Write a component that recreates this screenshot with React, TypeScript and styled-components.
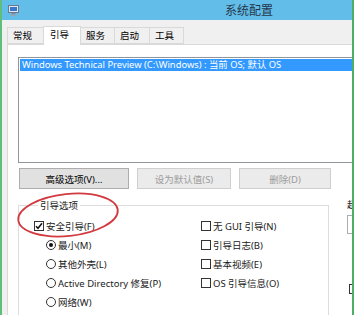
import styled, { createGlobalStyle } from 'styled-components'

const GlobalStyle = createGlobalStyle`
	html, body {
		margin: 0;
		padding: 0;
		background: #f0f0f0;
	}
	* {
		box-sizing: border-box;
	}
`

const FONT = `"Noto Sans", "Noto Sans CJK SC", sans-serif`

function MonitorIcon() {
	return (
		<svg width="11" height="11" viewBox="0 0 11 11">
			<rect x="0.5" y="0.5" width="10" height="7" fill="#dfe8f2" stroke="#6a7b8f" />
			<rect x="2" y="2" width="7" height="4" fill="#3b78c9" />
			<rect x="3.5" y="8" width="4" height="1.5" fill="#7d8a99" />
			<rect x="2" y="9.5" width="7" height="1.2" fill="#9aa6b3" />
		</svg>
	)
}

function CheckMark() {
	return (
		<svg width="8" height="8" viewBox="0 0 8 8">
			<path d="M1 4.2 L3 6.3 L7 1.2" fill="none" stroke="#111" strokeWidth="1.5" />
		</svg>
	)
}

function Ellipse() {
	return (
		<svg width="110" height="54" viewBox="0 0 110 54">
			<ellipse
				cx="55"
				cy="27"
				rx="50"
				ry="21"
				fill="none"
				stroke="#d23a3f"
				strokeWidth="1.8"
				transform="rotate(-6 55 27)"
			/>
		</svg>
	)
}

const tabs = [
	{ label: '常规', width: 37 },
	{ label: '引导', width: 38, active: true },
	{ label: '服务', width: 35 },
	{ label: '启动', width: 36 },
	{ label: '工具', width: 35 },
]

const leftOptions = [
	{ kind: 'check', label: '安全引导(F)', on: true },
	{ kind: 'radio', label: '最小(M)', on: true },
	{ kind: 'radio', label: '其他外壳(L)' },
	{ kind: 'radio', label: 'Active Directory 修复(P)' },
	{ kind: 'radio', label: '网络(W)' },
]

const rightOptions = ['无 GUI 引导(N)', '引导日志(B)', '基本视频(E)', 'OS 引导信息(O)']

function App() {
	return (
		<S.Window>
			<GlobalStyle />
			<S.TitleBar>
				<MonitorIcon />
				<S.Title>系统配置</S.Title>
			</S.TitleBar>
			<S.TabStrip>
				{tabs.map((t) => (
					<S.Tab key={t.label} $width={t.width} $active={!!t.active}>
						{t.label}
					</S.Tab>
				))}
			</S.TabStrip>
			<S.Panel>
				<S.ListBox>
					<S.SelectedRow>Windows Technical Preview (C:\Windows) : 当前 OS; 默认 OS</S.SelectedRow>
				</S.ListBox>
				<S.ButtonRow>
					<S.Button $width={110}>高级选项(V)...</S.Button>
					<S.Button $width={94} disabled>
						设为默认值(S)
					</S.Button>
					<S.Button $width={92} disabled>
						删除(D)
					</S.Button>
				</S.ButtonRow>
				<S.Lower>
					<S.Group>
						<S.Legend>引导选项</S.Legend>
						<S.OptionGrid>
							<S.Column>
								{leftOptions.map((o) => (
									<S.Option key={o.label} $indent={o.kind === 'radio'}>
										{o.kind === 'check' ? (
											<S.Box>{o.on && <CheckMark />}</S.Box>
										) : (
											<S.Radio $on={!!o.on} />
										)}
										<span>{o.label}</span>
									</S.Option>
								))}
							</S.Column>
							<S.Column>
								{rightOptions.map((label) => (
									<S.Option key={label} $indent={false}>
										<S.Box />
										<span>{label}</span>
									</S.Option>
								))}
							</S.Column>
						</S.OptionGrid>
					</S.Group>
					<S.Side>
						<S.SideLabel>超时(T):</S.SideLabel>
						<S.TextBox />
						<S.SideCheck>
							<S.Box />
						</S.SideCheck>
					</S.Side>
				</S.Lower>
			</S.Panel>
			<S.Circle>
				<Ellipse />
			</S.Circle>
		</S.Window>
	)
}
export default App

const Window = styled.div`
	position: relative;
	width: 354px;
	height: 315px;
	overflow: hidden;
	background: #f0f0f0;
	border-left: 2px solid #5fbf7a;
	border-right: 2px solid #4caf68;
	display: flex;
	flex-direction: column;
	font-family: ${FONT};
	color: #000;
`
const TitleBar = styled.div`
	height: 20px;
	flex: none;
	background: #63bde9;
	display: flex;
	align-items: center;
	padding-left: 6px;
`
const Title = styled.div`
	margin-left: 206px;
	font-size: 12px;
	line-height: 14px;
	color: #24384c;
	font-family: "Noto Sans CJK SC", sans-serif;
`
const TabStrip = styled.div`
	display: flex;
	align-items: flex-end;
	padding-left: 5px;
	margin-top: 6px;
	height: 19px;
	position: relative;
	z-index: 1;
`
const Tab = styled.div<{ $width: number; $active: boolean }>`
	width: ${({ $width }) => $width}px;
	height: ${({ $active }) => ($active ? 19 : 17)}px;
	margin-bottom: ${({ $active }) => ($active ? -1 : 0)}px;
	margin-left: -1px;
	&:first-child {
		margin-left: 0;
	}
	border: 1px solid #d9d9d9;
	border-bottom: ${({ $active }) => ($active ? 'none' : '1px solid #d9d9d9')};
	background: ${({ $active }) => ($active ? '#ffffff' : '#f0f0f0')};
	font-size: 9.5px;
	line-height: ${({ $active }) => ($active ? 15 : 15)}px;
	padding-left: ${({ $active }) => ($active ? 6 : 5)}px;
	font-family: "Noto Sans CJK SC", sans-serif;
	position: relative;
	z-index: ${({ $active }) => ($active ? 2 : 1)};
`
const Panel = styled.div`
	flex: 1;
	margin-left: 5px;
	width: 420px;
	background: #ffffff;
	border: 1px solid #d9d9d9;
	border-bottom: none;
	padding: 12px 0 0 10px;
`
const ListBox = styled.div`
	height: 106px;
	width: 400px;
	border: 1px solid #8f959c;
	padding: 1px;
`
const SelectedRow = styled.div`
	height: 12px;
	background: #3399ff;
	color: #ffffff;
	font-size: 9.4px;
	line-height: 12px;
	padding-left: 2px;
	white-space: nowrap;
`
const ButtonRow = styled.div`
	display: flex;
	gap: 8px;
	margin-top: 5px;
	margin-left: 1px;
`
const Button = styled.button<{ $width: number }>`
	width: ${({ $width }) => $width}px;
	height: 21px;
	padding: 0;
	border: 1px solid #adadad;
	background: #e1e1e1;
	font-family: ${FONT};
	font-size: 9.5px;
	color: #000;
	&:disabled {
		border-color: #cfcfcf;
		background: #ebebeb;
		color: #9c9c9c;
	}
`
const Lower = styled.div`
	display: flex;
	margin-top: 10px;
`
const Group = styled.fieldset`
	width: 311px;
	height: 140px;
	margin: 0;
	padding: 5px 0 0 15px;
	border: 1px solid #dcdcdc;
	flex: none;
`
const Legend = styled.legend`
	font-size: 9.5px;
	line-height: 12px;
	padding: 0 2px;
	margin-left: 4px;
	font-family: "Noto Sans CJK SC", sans-serif;
	color: #1a1a1a;
`
const OptionGrid = styled.div`
	display: grid;
	grid-template-columns: 167px 1fr;
`
const Column = styled.div`
	display: flex;
	flex-direction: column;
`
const Option = styled.div<{ $indent: boolean }>`
	height: 19px;
	display: flex;
	align-items: center;
	gap: 2px;
	padding-left: ${({ $indent }) => ($indent ? 12 : 0)}px;
	font-size: 9.5px;
	white-space: nowrap;
	color: #1a1a1a;
`
const Box = styled.span`
	width: 10px;
	height: 10px;
	border: 1px solid #333;
	background: #fff;
	display: inline-flex;
	align-items: center;
	justify-content: center;
	flex: none;
`
const Radio = styled.span<{ $on: boolean }>`
	width: 10px;
	height: 10px;
	border: 1px solid #333;
	border-radius: 50%;
	background: #fff;
	flex: none;
	display: inline-flex;
	align-items: center;
	justify-content: center;
	&::after {
		content: '';
		display: ${({ $on }) => ($on ? 'block' : 'none')};
		width: 4px;
		height: 4px;
		border-radius: 50%;
		background: #111;
	}
`
const Side = styled.div`
	margin-left: 18px;
	display: flex;
	flex-direction: column;
`
const SideLabel = styled.div`
	font-size: 9.5px;
	line-height: 12px;
	margin-top: 0;
	white-space: nowrap;
	color: #1a1a1a;
`
const TextBox = styled.div`
	margin-top: 4px;
	width: 60px;
	height: 19px;
	border: 1px solid #abadb3;
	background: #fff;
`
const SideCheck = styled.div`
	margin-top: 43px;
	margin-left: 2px;
`
const Circle = styled.div`
	position: absolute;
	left: 11px;
	top: 188px;
	line-height: 0;
	pointer-events: none;
`
const S = {
	Window,
	TitleBar,
	Title,
	TabStrip,
	Tab,
	Panel,
	ListBox,
	SelectedRow,
	ButtonRow,
	Button,
	Lower,
	Group,
	Legend,
	OptionGrid,
	Column,
	Option,
	Box,
	Radio,
	Side,
	SideLabel,
	TextBox,
	SideCheck,
	Circle,
}
